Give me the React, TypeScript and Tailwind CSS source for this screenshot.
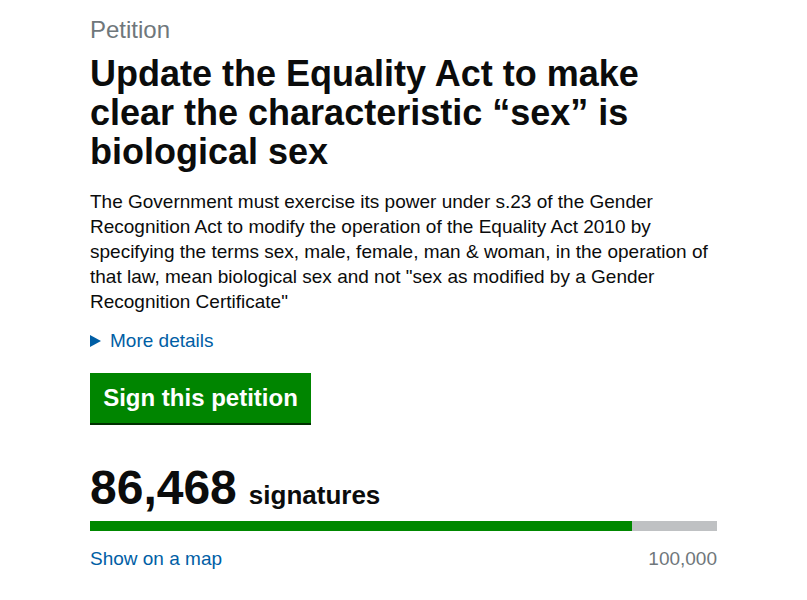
export default function App() {
  const count = 86468;
  const target = 100000;
  const pct = (count / target) * 100;
  return (
    <div className="min-h-[600px] w-full bg-white" style={{ fontFamily: '"Liberation Sans", Arial, sans-serif' }}>
      <div className="mx-auto w-[627px] pt-[15px]">
        <p className="text-[24px] leading-[30px] text-[#6f777b]">Petition</p>
        <h1 className="mt-[9px] text-[36px] font-bold leading-[39px] text-[#0b0c0c]">
          Update the Equality Act to make clear the characteristic “sex” is biological sex
        </h1>
        <p className="mt-[18px] text-[19px] leading-[25px] text-[#0b0c0c]">
          The Government must exercise its power under s.23 of the Gender Recognition Act to modify the operation of the Equality Act 2010 by specifying the terms sex, male, female, man &amp; woman, in the operation of that law, mean biological sex and not "sex as modified by a Gender Recognition Certificate"
        </p>
        <div className="mt-[14px] flex items-center gap-[9px] text-[19px] leading-[25px] text-[#005ea5]">
          <span className="inline-block h-0 w-0 border-y-[6px] border-l-[11px] border-y-transparent border-l-[#005ea5]" />
          <span>More details</span>
        </div>
        <div className="mt-[20px]">
          <button className="h-[50px] w-[221px] bg-[#008500] text-[24px] font-bold text-white shadow-[0_2px_0_#003000]">
            Sign this petition
          </button>
        </div>
        <div className="mt-[40px] flex items-baseline gap-[12px] text-[#0b0c0c]">
          <span className="text-[48px] font-bold leading-[50px]">86,468</span>
          <span className="text-[26px] font-bold leading-[30px]">signatures</span>
        </div>
        <div className="mt-[8px] h-[10px] w-full bg-[#bfc1c3]">
          <div className="h-full bg-[#008800]" style={{ width: `${pct}%` }} />
        </div>
        <div className="mt-[15px] flex justify-between text-[19px] leading-[25px]">
          <span className="text-[#005ea5]">Show on a map</span>
          <span className="text-[#6f777b]">100,000</span>
        </div>
      </div>
    </div>
  );
}
